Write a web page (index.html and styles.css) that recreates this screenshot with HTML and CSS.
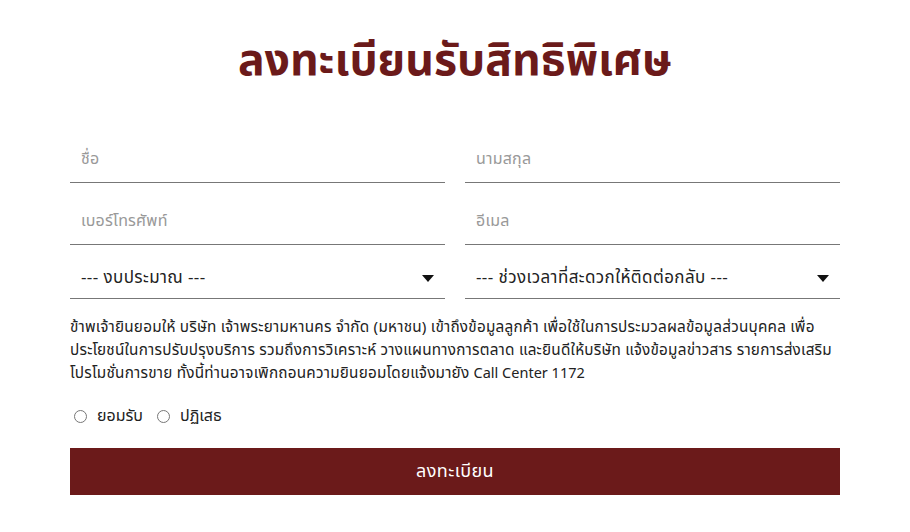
FILE: index.html
```html
<!DOCTYPE html>
<html lang="th">
<head>
  <meta charset="UTF-8">
  <meta name="viewport" content="width=device-width, initial-scale=1.0">
  <title>ลงทะเบียนรับสิทธิพิเศษ</title>
  <link rel="stylesheet" href="styles.css">
</head>
<body>
  <div class="register">
    <h1 class="title">ลงทะเบียนรับสิทธิพิเศษ</h1>

    <form class="form">
      <div class="grid">
        <div class="field"><input type="text" placeholder="ชื่อ"></div>
        <div class="field"><input type="text" placeholder="นามสกุล"></div>
        <div class="field"><input type="text" placeholder="เบอร์โทรศัพท์"></div>
        <div class="field"><input type="text" placeholder="อีเมล"></div>
        <div class="field select">
          <span>--- งบประมาณ ---</span>
          <i class="caret"></i>
        </div>
        <div class="field select">
          <span>--- ช่วงเวลาที่สะดวกให้ติดต่อกลับ ---</span>
          <i class="caret"></i>
        </div>
      </div>

      <p class="consent">ข้าพเจ้ายินยอมให้ บริษัท เจ้าพระยามหานคร จำกัด (มหาชน) เข้าถึงข้อมูลลูกค้า เพื่อใช้ในการประมวลผลข้อมูลส่วนบุคคล เพื่อประโยชน์ในการปรับปรุงบริการ รวมถึงการวิเคราะห์ วางแผนทางการตลาด และยินดีให้บริษัท แจ้งข้อมูลข่าวสาร รายการส่งเสริมโปรโมชั่นการขาย ทั้งนี้ท่านอาจเพิกถอนความยินยอมโดยแจ้งมายัง <span class="latin">Call Center 1172</span></p>

      <div class="choices">
        <label class="choice"><span class="radio"></span>ยอมรับ</label>
        <label class="choice"><span class="radio"></span>ปฏิเสธ</label>
      </div>

      <button type="button" class="submit">ลงทะเบียน</button>
    </form>
  </div>
</body>
</html>
```

FILE: styles.css
```css
html, body {
  margin: 0;
  padding: 0;
  background: #fff;
}

body {
  font-family: "Noto Sans", "Noto Sans Thai", sans-serif;
  color: #222;
}

.register {
  width: 770px;
  margin: 0 auto;
  padding-top: 26px;
}

.title {
  margin: 0;
  text-align: center;
  font-size: 44.5px;
  line-height: 64px;
  font-weight: 700;
  color: #6b1a1a;
}

.form {
  margin-top: 44px;
}

.grid {
  display: grid;
  grid-template-columns: 1fr 1fr;
  column-gap: 20px;
}

.field {
  height: 48px;
  border-bottom: 1px solid #777;
  display: flex;
  align-items: center;
  margin-top: 13px;
}

.field:nth-child(-n+2) {
  margin-top: 0;
}

.field input {
  width: 100%;
  border: 0;
  outline: 0;
  padding: 0 11px;
  font: inherit;
  font-size: 16px;
  letter-spacing: 0.2px;
  background: transparent;
}

.field input::placeholder {
  color: #999;
}

.select {
  height: 40px;
  padding: 0 11px;
  justify-content: space-between;
  font-size: 17px;
  letter-spacing: 0.4px;
  color: #222;
}

.caret {
  width: 0;
  height: 0;
  border-left: 6px solid transparent;
  border-right: 6px solid transparent;
  border-top: 7px solid #111;
}

.consent {
  margin: 16px 0 0;
  font-size: 15.3px;
  letter-spacing: 0.22px;
  line-height: 23px;
  color: #222;
}

.consent .latin {
  font-size: 14.5px;
  letter-spacing: 0;
}

.choices {
  display: flex;
  gap: 14px;
  margin-top: 20px;
  padding-left: 4px;
  font-size: 16px;
}

.choice {
  display: flex;
  align-items: center;
  gap: 10px;
}

.radio {
  width: 11px;
  height: 11px;
  border: 1px solid #777;
  border-radius: 50%;
}

.submit {
  display: block;
  width: 100%;
  height: 47px;
  margin-top: 20px;
  border: 0;
  background: #6b1a1a;
  color: #fff;
  font: inherit;
  font-size: 18px;
  letter-spacing: 0.4px;
}
```
